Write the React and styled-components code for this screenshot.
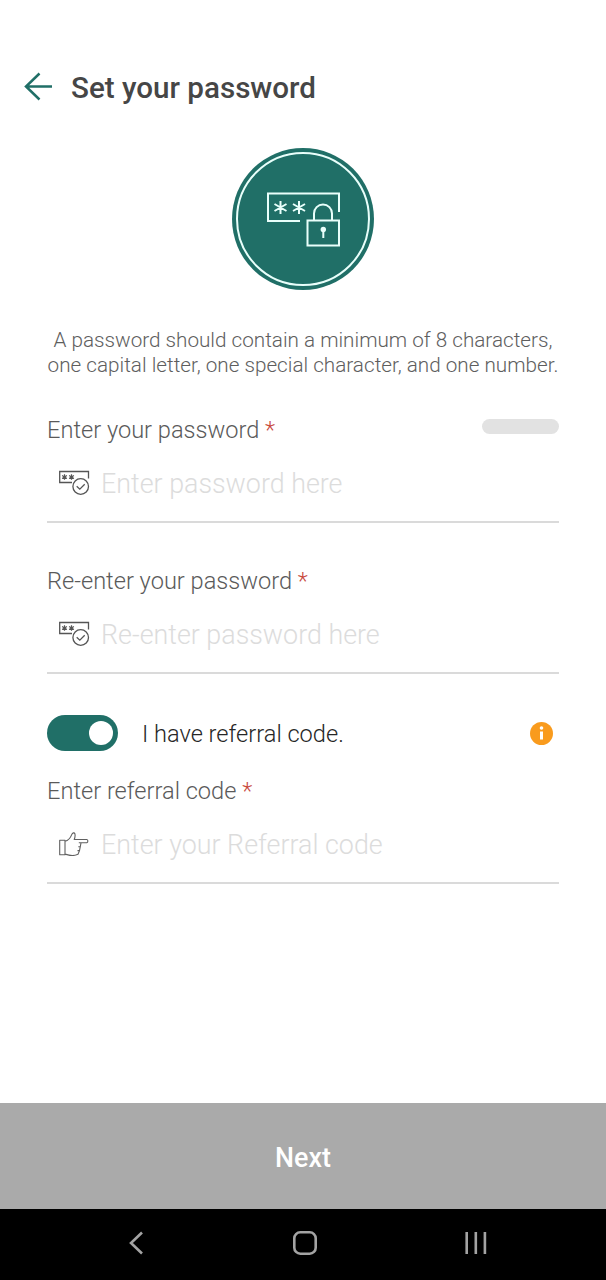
import React, { useState } from 'react';
import styled, { createGlobalStyle } from 'styled-components';

const GlobalStyle = createGlobalStyle`
  *, *::before, *::after { box-sizing: border-box; }
  body { margin: 0; background: #fff; font-family: Roboto, "Liberation Sans", sans-serif; }
  svg { display: block; flex: none; }
`;

const Screen = styled.div`
  display: flex;
  flex-direction: column;
  width: 606px;
  height: 1280px;
  background: #fff;
  overflow: hidden;
`;

const Header = styled.header`
  display: flex;
  align-items: center;
  gap: 18px;
  height: 40px;
  margin-top: 67px;
  padding-left: 24px;
`;

const IconButton = styled.button`
  padding: 0;
  border: 0;
  background: none;
`;

const Title = styled.h1`
  margin: 0;
  padding-top: 1px;
  font-size: 29.6px;
  font-weight: 500;
  line-height: 40px;
  color: #464646;
  white-space: nowrap;
`;

const Emblem = styled.div`
  align-self: center;
  margin-top: 41px;
`;

const Content = styled.main`
  display: flex;
  flex-direction: column;
  flex: 1;
  padding: 0 47px;
`;

const Hint = styled.p`
  margin: 38px -20px 0;
  font-size: 20.7px;
  font-weight: 300;
  line-height: 24.5px;
  text-align: center;
  color: #5e5e5e;
  white-space: nowrap;
`;

const Field = styled.div`
  display: flex;
  flex-direction: column;
  height: 108px;
  margin-top: ${(p) => p.$top}px;
  border-bottom: 2px solid #dadada;
`;

const LabelRow = styled.div`
  display: flex;
  justify-content: space-between;
  height: 30px;
`;

const Label = styled.label`
  font-size: 23.6px;
  font-weight: 300;
  line-height: 30px;
  color: #5a5a5a;
  white-space: nowrap;
`;

const Required = styled.span`
  color: #c8483c;
`;

const StrengthBar = styled.div`
  width: 77px;
  height: 15px;
  margin-top: 4px;
  border-radius: 8px;
  background: #e2e2e2;
`;

const InputRow = styled.div`
  display: flex;
  align-items: center;
  gap: 11px;
  height: 78px;
  padding-left: 12px;

  svg { margin-bottom: 2px; }
`;

const Input = styled.input`
  flex: 1;
  min-width: 0;
  height: 40px;
  padding: 2px 0 0;
  border: 0;
  outline: 0;
  background: none;
  font-family: inherit;
  font-size: 26.85px;
  font-weight: 300;
  color: #444;
  &::placeholder { color: #dcdcdc; opacity: 1; }
`;

const ReferralRow = styled.div`
  display: flex;
  align-items: center;
  height: 36px;
  margin-top: 41px;
  padding-right: 6px;
`;

const Switch = styled.button`
  display: flex;
  align-items: center;
  justify-content: ${(p) => (p.$on ? 'flex-end' : 'flex-start')};
  width: 71px;
  height: 36px;
  padding: 0 5.5px;
  border: 0;
  border-radius: 18px;
  background: ${(p) => (p.$on ? '#206f67' : '#b5b5b5')};
`;

const Knob = styled.span`
  width: 24px;
  height: 24px;
  border-radius: 50%;
  background: #fff;
`;

const SwitchLabel = styled.span`
  flex: 1;
  margin-left: 24px;
  padding-top: 2px;
  font-size: 23.6px;
  font-weight: 300;
  line-height: 36px;
  color: #262626;
`;

const NextButton = styled.button`
  height: 106px;
  padding: 3px 0 0;
  border: 0;
  background: #aaa;
  color: #fff;
  font-family: inherit;
  font-size: 26.8px;
  font-weight: 500;
`;

const NavBar = styled.nav`
  display: flex;
  align-items: center;
  justify-content: space-between;
  height: 71px;
  padding: 0 119px 3px 129px;
  background: #000;
`;

const BackArrow = () => (
  <svg width="29" height="30" viewBox="0 0 29 30" fill="none" stroke="#206f67" strokeWidth="2.5">
    <path d="M28 14.5H2M15.5 1.5L2 14.5L15.5 27.5" />
  </svg>
);

const PasswordEmblem = () => (
  <svg width="142" height="142" viewBox="0 0 142 142" fill="none" stroke="#e9fffb" strokeWidth="2">
    <circle cx="71" cy="71" r="71" fill="#206f67" stroke="none" />
    <circle cx="71" cy="71" r="66" />
    <path d="M68 73H36V45.5H107V64" />
    <rect x="75.5" y="72.5" width="31.5" height="25" />
    <path d="M82 72V65.5A9 9 0 0 1 100 65.5V72" />
    <path d="M48.5 53V66M42.5 56L54.5 63M42.5 63L54.5 56M67 53V66M61 56L73 63M61 63L73 56" />
    <circle cx="91.3" cy="81.5" r="2.7" fill="#e9fffb" stroke="none" />
    <path d="M91.3 82V90" />
  </svg>
);

const PasswordIcon = () => (
  <svg width="31" height="26" viewBox="0 0 31 26" fill="none" stroke="#555" strokeWidth="1.3">
    <path d="M13 13.5H0.7V2.5H29.5V9.5" />
    <path d="M5.5 5.3V10.7M3.1 6.6L7.9 9.4M3.1 9.4L7.9 6.6M12.5 5.3V10.7M10.1 6.6L14.9 9.4M10.1 9.4L14.9 6.6" strokeWidth="1.2" />
    <circle cx="21.7" cy="17.5" r="7.8" />
    <path d="M17.7 17.3L20.8 20.2L25.7 15.3" />
  </svg>
);

const PointingHandIcon = () => (
  <svg width="31" height="26" viewBox="0 0 31 26" fill="none" stroke="#606060" strokeWidth="1.1" strokeLinejoin="round">
    <g transform="translate(-0.5 0.8)">
      <path d="M1.2 9.5H6.5V24H1.2ZM6.5 10.5C9.5 9.8 12 7 13.2 3.8C14 1.8 15.8 1.5 16.4 3C16.9 5 16.5 6.800 15.7 8.7H28.3C29.7 9 29.7 11.5 28.3 12H22.5L21.8 15.9L21 19.8L19.5 23.5C16.5 24.8 12.5 24.8 10.5 24.3L6.5 23.3M23 12H20.3M22.3 15.9H19.8M21.5 19.8H19" />
    </g>
  </svg>
);

const InfoIcon = () => (
  <svg width="23" height="23" viewBox="0 0 23 23">
    <circle cx="11.5" cy="11.5" r="11.5" fill="#f99b1d" />
    <rect x="10" y="9.5" width="3" height="8" fill="#fff" />
    <circle cx="11.5" cy="6" r="1.8" fill="#fff" />
  </svg>
);

const NavBackIcon = () => (
  <svg width="15" height="24" viewBox="0 0 15 24" fill="none" stroke="#a3a3a3" strokeWidth="2.6">
    <path d="M13 1.5L2 12L13 22.5" />
  </svg>
);

const NavHomeIcon = () => (
  <svg width="25" height="24" viewBox="0 0 25 24" fill="none" stroke="#a3a3a3" strokeWidth="2.6">
    <rect x="2.3" y="1.3" width="21.4" height="21.4" rx="6" />
  </svg>
);

const NavRecentsIcon = () => (
  <svg width="22" height="24" viewBox="0 0 22 24" stroke="#a3a3a3" strokeWidth="2.6">
    <path d="M1.7 1V23M10.8 1V23M19.9 1V23" />
  </svg>
);

function FormField({ id, label, placeholder, icon, top, type = 'password', children }) {
  return (
    <Field $top={top}>
      <LabelRow>
        <Label htmlFor={id}>{label} <Required>*</Required></Label>
        {children}
      </LabelRow>
      <InputRow>
        {icon}
        <Input id={id} type={type} placeholder={placeholder} />
      </InputRow>
    </Field>
  );
}

export default function App() {
  const [hasCode, setHasCode] = useState(true);
  return (
    <Screen>
      <GlobalStyle />
      <Header>
        <IconButton aria-label="Back"><BackArrow /></IconButton>
        <Title>Set your password</Title>
      </Header>
      <Content>
        <Emblem><PasswordEmblem /></Emblem>
        <Hint>
          A password should contain a minimum of 8 characters,<br />
          one capital letter, one special character, and one number.
        </Hint>
        <FormField id="password" label="Enter your password" placeholder="Enter password here" icon={<PasswordIcon />} top={38}>
          <StrengthBar />
        </FormField>
        <FormField id="confirm" label="Re-enter your password" placeholder="Re-enter password here" icon={<PasswordIcon />} top={43} />
        <ReferralRow>
          <Switch role="switch" aria-checked={hasCode} $on={hasCode} onClick={() => setHasCode(!hasCode)}><Knob /></Switch>
          <SwitchLabel>I have referral code.</SwitchLabel>
          <InfoIcon />
        </ReferralRow>
        {hasCode && (
          <FormField id="referral" type="text" label="Enter referral code" placeholder="Enter your Referral code" icon={<PointingHandIcon />} top={25} />
        )}
      </Content>
      <NextButton>Next</NextButton>
      <NavBar>
        <NavBackIcon />
        <NavHomeIcon />
        <NavRecentsIcon />
      </NavBar>
    </Screen>
  );
}
